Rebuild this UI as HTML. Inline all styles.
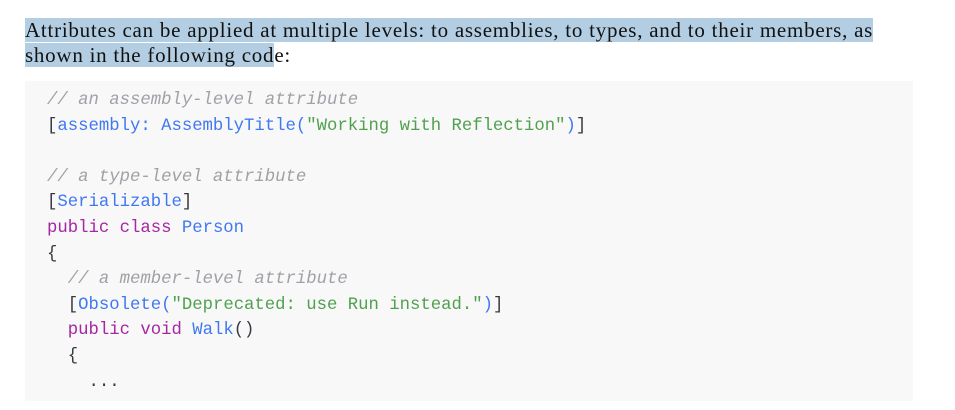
<!DOCTYPE html>
<html><head><meta charset="utf-8"><style>
body{margin:0;width:955px;height:410px;background:#fff;overflow:hidden;position:relative}
.p{position:absolute;left:25px;top:18px;font-family:"Liberation Serif",serif;font-size:21px;letter-spacing:0.75px;line-height:25px;color:#111;width:920px}
.hl{background:#b3cee2}
.code{position:absolute;left:25px;top:81px;width:888px;height:320px;background:#f8f8f8}
pre{margin:0;position:absolute;left:47px;top:88px;font-family:"Liberation Mono",monospace;font-size:17.3px;line-height:25.6px;color:#383a42}
.c{color:#a0a1a7;font-style:italic}.b{color:#4078f2}.g{color:#50a14f}.k{color:#a626a4}
</style></head><body>
<div class="p"><span class="hl">Attributes can be applied at multiple levels: to assemblies, to types, and to their members, as<br>shown in the following cod</span>e:</div>
<div class="code"></div>
<pre><span class="c">// an assembly-level attribute</span>
[<span class="b">assembly: AssemblyTitle(</span><span class="g">"Working with Reflection"</span><span class="b">)</span>]

<span class="c">// a type-level attribute</span>
[<span class="b">Serializable</span>]
<span class="k">public class</span> <span class="b">Person</span>
{
  <span class="c">// a member-level attribute</span>
  [<span class="b">Obsolete(</span><span class="g">"Deprecated: use Run instead."</span><span class="b">)</span>]
  <span class="k">public void</span> <span class="b">Walk</span>()
  {
    ...</pre>
</body></html>
